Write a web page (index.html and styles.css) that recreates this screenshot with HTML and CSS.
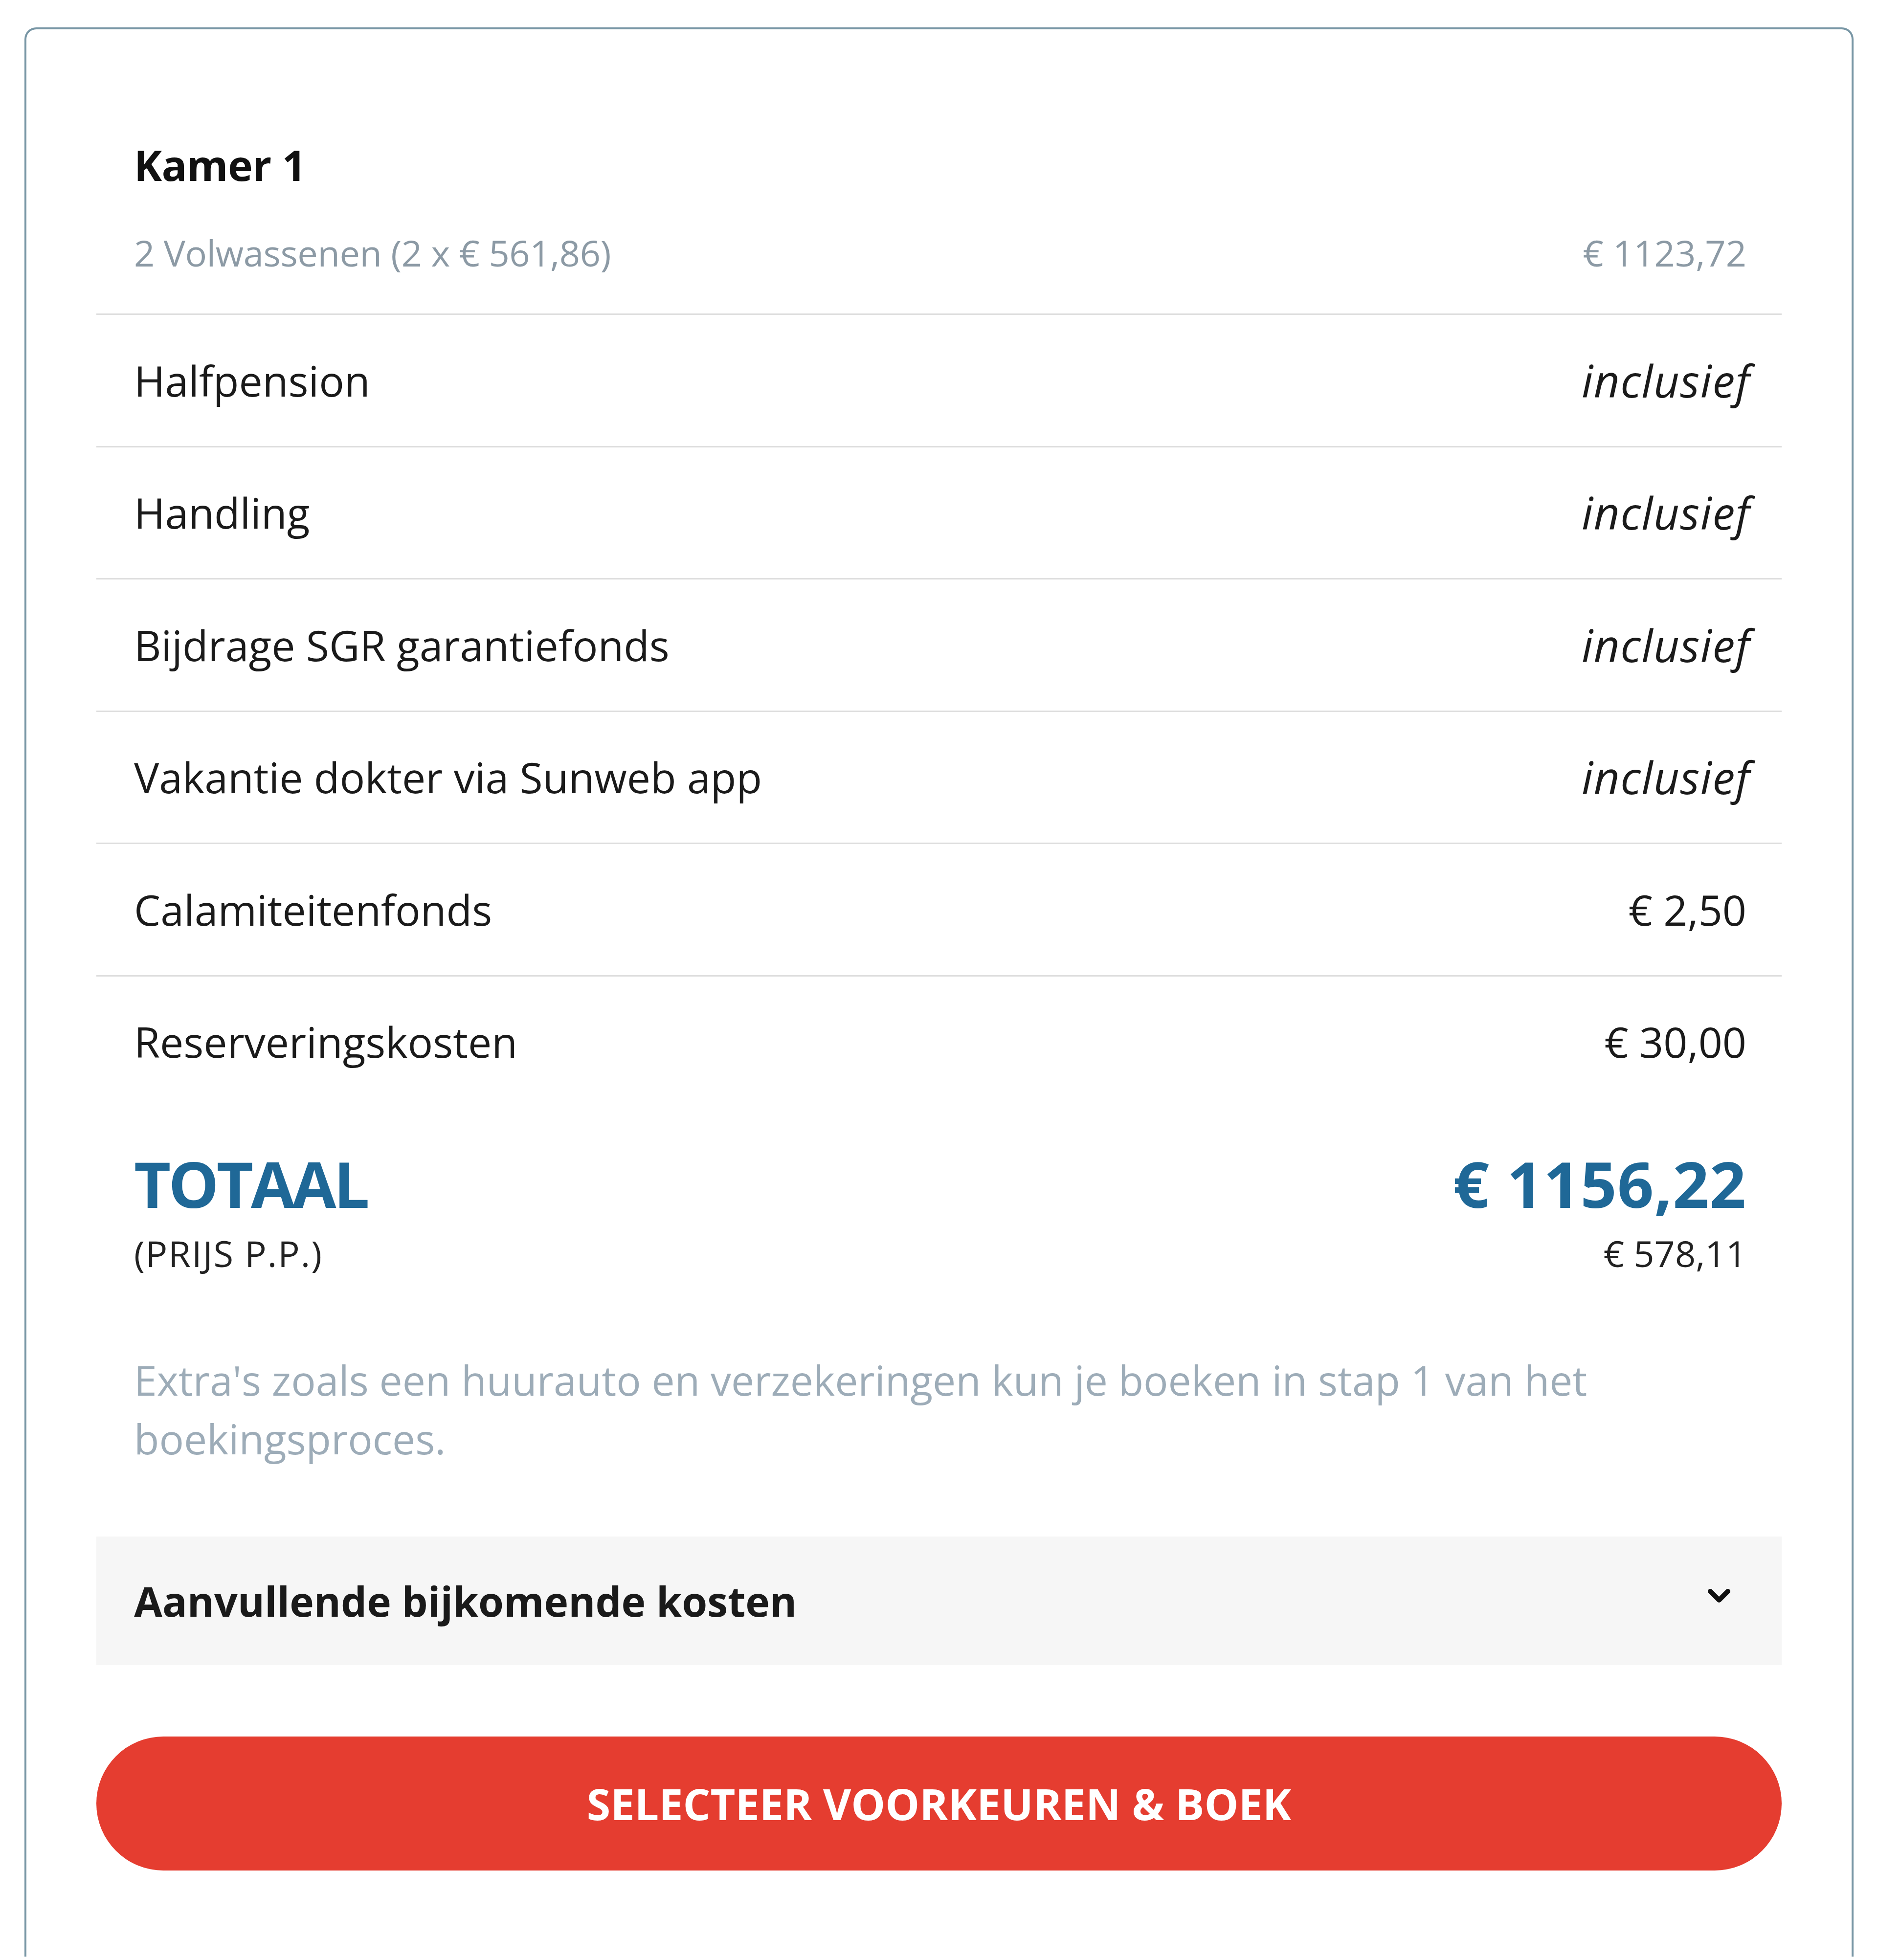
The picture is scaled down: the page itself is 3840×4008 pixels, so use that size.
FILE: index.html
```html
<!DOCTYPE html>
<html lang="nl">
<head>
<meta charset="utf-8">
<title>Prijsoverzicht</title>
<link rel="stylesheet" href="styles.css">
</head>
<body>
<div class="page">
  <section class="card">
    <div class="room">
      <div class="room-title">Kamer 1</div>
      <div class="room-line">
        <span>2 Volwassenen (2 x € 561,86)</span>
        <span>€ 1123,72</span>
      </div>
    </div>
    <div class="row"><span>Halfpension</span><span class="incl">inclusief</span></div>
    <div class="row"><span>Handling</span><span class="incl">inclusief</span></div>
    <div class="row"><span>Bijdrage SGR garantiefonds</span><span class="incl">inclusief</span></div>
    <div class="row"><span>Vakantie dokter via Sunweb app</span><span class="incl">inclusief</span></div>
    <div class="row"><span>Calamiteitenfonds</span><span>€ 2,50</span></div>
    <div class="row"><span>Reserveringskosten</span><span>€ 30,00</span></div>

    <div class="total">
      <div class="total-main"><span class="total-label">TOTAAL</span><span class="total-price">€ 1156,22</span></div>
      <div class="total-pp"><span class="pp-label">(PRIJS P.P.)</span><span>€ 578,11</span></div>
    </div>

    <p class="note">Extra's zoals een huurauto en verzekeringen kun je boeken in stap 1 van het boekingsproces.</p>

    <div class="extra-costs">
      <span>Aanvullende bijkomende kosten</span>
      <svg class="chevron" width="50" height="32" viewBox="0 0 50 32" aria-hidden="true">
        <polyline points="7,7 25,25 43,7" fill="none" stroke="#111" stroke-width="10" stroke-linecap="round" stroke-linejoin="round"/>
      </svg>
    </div>

    <button class="book-btn" type="button">SELECTEER VOORKEUREN &amp; BOEK</button>
  </section>
</div>
</body>
</html>
```
FILE: styles.css
```css
html, body {
  margin: 0;
  padding: 0;
  background: #ffffff;
}

body {
  font-family: "Open Sans", "Noto Sans", "Liberation Sans", sans-serif;
  color: #1a1a1a;
}

.page {
  padding: 56px 50px 0 50px;
}

.card {
  border: 4px solid #7896a5;
  border-bottom: none;
  border-radius: 24px 24px 0 0;
  padding: 217px 143px 176px 143px;
  background: #ffffff;
}

.room {
  padding: 0 72px 74px 77px;
}

.room-title {
  font-weight: 700;
  font-size: 86px;
  line-height: 120px;
  color: #111111;
  letter-spacing: -0.5px;
}

.room-line {
  margin-top: 70px;
  display: flex;
  justify-content: space-between;
  font-size: 74px;
  line-height: 100px;
  color: #8c9aa5;
}

.room-line span:first-child {
  letter-spacing: -0.4px;
}

.row {
  border-top: 3px solid #dedede;
  height: 267.5px;
  padding: 0 72px 0 77px;
  display: flex;
  align-items: center;
  justify-content: space-between;
  font-size: 86px;
  line-height: 120px;
  color: #1a1a1a;
}

.incl {
  font-style: italic;
  font-size: 92px;
  letter-spacing: 1.5px;
  margin-right: -8px;
}

.total {
  margin-top: 81px;
  padding: 0 72px 0 77px;
}

.total-main {
  display: flex;
  justify-content: space-between;
  font-weight: 700;
  font-size: 130px;
  line-height: 150px;
  color: #1f6897;
}

.total-label {
  letter-spacing: -5px;
}

.total-price {
  letter-spacing: 1px;
}

.total-pp {
  margin-top: 23px;
  display: flex;
  justify-content: space-between;
  font-size: 74px;
  line-height: 90px;
  color: #222222;
}

.pp-label {
  letter-spacing: 2px;
}

.note {
  margin: 154px 0 0 0;
  padding: 0 72px 0 77px;
  font-size: 84px;
  line-height: 120px;
  color: #9dacb8;
}

.extra-costs {
  margin-top: 140px;
  height: 263px;
  background: #f6f6f6;
  padding: 0 103px 0 77px;
  display: flex;
  align-items: center;
  justify-content: space-between;
  font-weight: 700;
  font-size: 84px;
  color: #1a1a1a;
}

.chevron {
  display: block;
  margin-top: -22px;
}

.book-btn {
  display: block;
  width: 100%;
  margin-top: 146px;
  height: 274px;
  border: none;
  border-radius: 137px;
  background: #e53d30;
  color: #ffffff;
  font-family: "Open Sans", "Noto Sans", "Liberation Sans", sans-serif;
  font-weight: 700;
  font-size: 88px;
  line-height: 274px;
  padding: 0;
  text-align: center;
}
```
